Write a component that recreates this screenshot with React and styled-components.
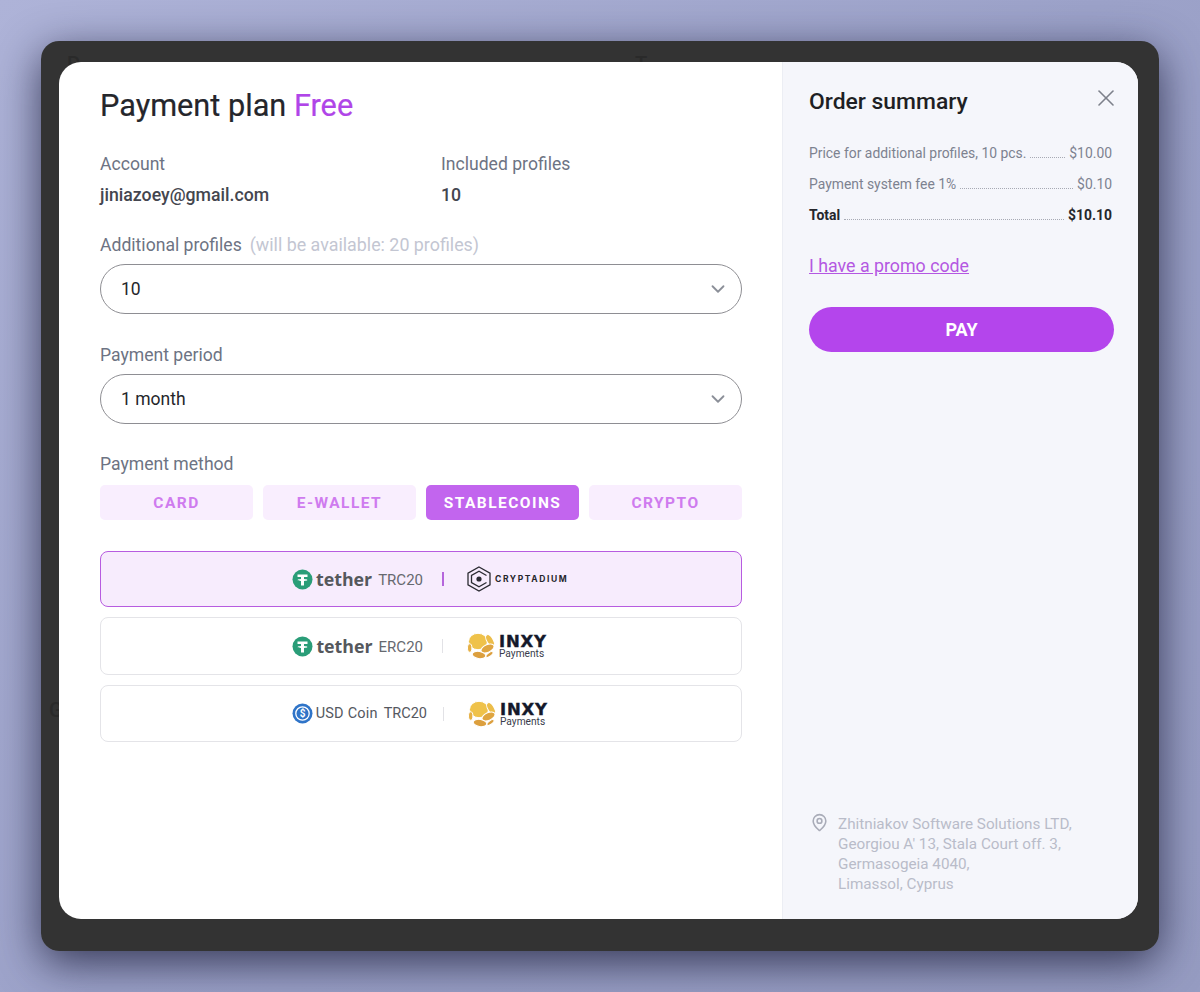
import styled, { createGlobalStyle } from "styled-components";
import { ChevronDown, X, MapPin } from "lucide-react";

const GlobalStyle = createGlobalStyle`
  html, body {
    margin: 0;
    padding: 0;
    background: #9ca2c8;
    font-family: Roboto, "Liberation Sans", sans-serif;
  }
`;

const Page = styled.div`
  width: 1200px;
  height: 992px;
  box-sizing: border-box;
  padding: 41px;
  overflow: hidden;
  background: linear-gradient(135deg, #aeb3d8 0%, #9ca2c9 50%, #969cc2 100%);
`;

const Frame = styled.div`
  position: relative;
  width: 1118px;
  height: 910px;
  box-sizing: border-box;
  padding: 21px 21px 32px 18px;
  overflow: hidden;
  background: #333333;
  border-radius: 18px;
`;

const FrameShadow = styled.div`
  border-radius: 18px;
  box-shadow: 0 12px 44px rgba(20, 22, 50, 0.75);
`;

const Modal = styled.div`
  position: relative;
  height: 857px;
  display: flex;
  background: #fff;
  border-radius: 22px;
  overflow: hidden;
`;

// dimmed page text showing behind the modal
const Ghost = styled.span`
  position: absolute;
  left: ${(p) => p.$x}px;
  top: ${(p) => p.$y}px;
  font-size: 20px;
  line-height: 24px;
  font-weight: 500;
  color: #2a2a2a;
`;

const Main = styled.div`
  width: 724px;
  box-sizing: border-box;
  padding: 25px 40px 0 41px;
  border-right: 1px solid #eceef4;
`;

const Title = styled.h1`
  margin: 0;
  font-size: 30.7px;
  line-height: 38px;
  font-weight: 400;
  color: #25262b;
  -webkit-text-stroke: 0.2px #25262b;
`;

const Accent = styled.span`
  color: #b045e8;
  -webkit-text-stroke: 0.2px #b045e8;
`;

const InfoRow = styled.div`
  display: grid;
  grid-template-columns: 341px 1fr;
  margin-top: 28px;
`;

const Label = styled.div`
  font-size: 17.6px;
  line-height: 22px;
  color: #6d7383;
`;

const Value = styled.div`
  margin-top: 9px;
  font-size: 17.7px;
  line-height: 22px;
  font-weight: 500;
  color: #44464f;
`;

const Field = styled.div`
  margin-top: ${(p) => p.$top}px;
`;

const Hint = styled.span`
  margin-left: 8px;
  font-size: 17.85px;
  color: #c3c6d2;
`;

const SelectBox = styled.div`
  display: flex;
  align-items: center;
  justify-content: space-between;
  box-sizing: border-box;
  height: 50px;
  margin-top: 8px;
  padding: 0 12px 0 20px;
  border: 1px solid #8e8e93;
  border-radius: 25px;
  font-size: 17.5px;
  color: #25262b;

  svg {
    color: #8b8f98;
  }
`;

const Tabs = styled.div`
  display: grid;
  grid-template-columns: repeat(4, 153px);
  justify-content: space-between;
  margin-top: 10px;
`;

const Tab = styled.div`
  display: flex;
  align-items: center;
  justify-content: center;
  height: 35px;
  border-radius: 5px;
  font-size: 15.5px;
  font-weight: 700;
  letter-spacing: 1.45px;
  color: ${(p) => (p.$active ? "#fff" : "#cf7bef")};
  background: ${(p) => (p.$active ? "#c265ee" : "#f9eefe")};
`;

const Methods = styled.div`
  display: flex;
  flex-direction: column;
  gap: 10px;
  margin-top: 31px;
`;

const Method = styled.div`
  display: grid;
  grid-template-columns: ${(p) => p.$split}px 1px 1fr;
  align-items: center;
  height: ${(p) => p.$height}px;
  box-sizing: border-box;
  border: 1px solid ${(p) => (p.$active ? "#b75ce0" : "#e4e4e8")};
  border-radius: 8px;
  background: ${(p) => (p.$active ? "#f7ecfd" : "#fff")};
`;

const CoinSide = styled.div`
  display: flex;
  align-items: center;
  justify-content: flex-end;
  padding-right: ${(p) => p.$pad}px;
`;

const Divider = styled.div`
  height: 14px;
  width: ${(p) => (p.$active ? 2 : 1)}px;
  background: ${(p) => (p.$active ? "#b565dc" : "#e2e2e6")};
`;

const ProviderSide = styled.div`
  display: flex;
  align-items: center;
  padding-left: ${(p) => p.$pad}px;
`;

const TetherWord = styled.span`
  margin-left: 3px;
  font-family: "Open Sans", sans-serif;
  font-size: 17.8px;
  font-weight: 700;
  line-height: 24px;
  color: #55585c;
`;

const Network = styled.span`
  margin-left: 6px;
  margin-top: 2px;
  font-size: 15px;
  color: #66696f;
`;

const CoinName = styled.span`
  margin-left: 3px;
  font-size: 14.5px;
  letter-spacing: 0.2px;
  color: #55585f;
`;

const CoinNetwork = styled.span`
  margin-left: 6px;
  font-size: 14.5px;
  color: #55585f;
`;

const CryptadiumWord = styled.span`
  margin-left: 4px;
  font-family: Inter, sans-serif;
  font-size: 8.5px;
  font-weight: 700;
  letter-spacing: 1.6px;
  color: #26262c;
`;

const InxyText = styled.div`
  display: flex;
  flex-direction: column;
  margin: 2px 0 0 3px;
`;

const InxyWord = styled.span`
  font-family: "DejaVu Sans", sans-serif;
  font-size: 16.5px;
  line-height: 14px;
  font-weight: 700;
  letter-spacing: 0.8px;
  color: #15192b;
  -webkit-text-stroke: 0.4px #15192b;
`;

const InxySub = styled.span`
  font-size: 10.2px;
  line-height: 10px;
  color: #3a3d4c;
`;

const Side = styled.div`
  flex: 1;
  display: flex;
  flex-direction: column;
  box-sizing: border-box;
  padding: 25px 24px 25px 26px;
  background: #f5f6fb;
`;

const SideHead = styled.div`
  display: flex;
  align-items: flex-start;
  justify-content: space-between;
`;

const SideTitle = styled.h2`
  margin: 0;
  font-size: 22.9px;
  line-height: 30px;
  font-weight: 500;
  color: #1e1f24;
`;

const CloseIcon = styled(X)`
  color: #7d818b;
  margin: -3px -6px 0 0;
`;

const Lines = styled.div`
  display: flex;
  flex-direction: column;
  gap: 10px;
  margin-top: 26px;
  padding-right: 2px;
`;

const Line = styled.div`
  display: flex;
  align-items: baseline;
  font-size: 13.9px;
  line-height: 21px;
  font-weight: ${(p) => (p.$total ? 700 : 400)};
  color: ${(p) => (p.$total ? "#25262b" : "#7d8290")};
`;

const Dots = styled.span`
  flex: 1;
  margin: 0 4px;
  border-bottom: 1px dotted #a7aab4;
`;

const Promo = styled.a`
  display: block;
  margin-top: 28px;
  font-size: 17.8px;
  line-height: 24px;
  color: #b458e2;
  text-decoration: underline;
  text-underline-offset: 1px;
`;

const PayButton = styled.button`
  height: 45px;
  margin-top: 29px;
  border: none;
  border-radius: 23px;
  background: #b445ec;
  color: #fff;
  font-family: inherit;
  font-size: 18px;
  font-weight: 700;
`;

const Address = styled.div`
  display: flex;
  gap: 9px;
  margin-top: auto;
  padding-left: 1px;
  font-size: 15.25px;
  line-height: 20px;
  color: #b9bcc9;

  svg {
    flex: none;
    margin-top: -1px;
    color: #a9acb8;
  }
`;

const TetherIcon = () => (
  <svg width="21" height="21" viewBox="0 0 21 21">
    <circle cx="10.5" cy="10.5" r="10" fill="#2a9d78" />
    <path d="M5.5 5.5h10v2.6h-3.5v2c1.8.1 3.5.5 3.5 1s-1.7.9-3.5 1v4.4H9v-4.4c-1.8-.1-3.5-.5-3.5-1s1.7-.9 3.5-1v-2H5.5z" fill="#fff" />
  </svg>
);

const UsdcIcon = () => (
  <svg width="21" height="21" viewBox="0 0 21 21">
    <circle cx="10.5" cy="10.5" r="10" fill="#2f74c8" />
    <circle cx="10.5" cy="10.5" r="6.7" fill="none" stroke="#fff" strokeWidth="1.3" />
    <text x="10.5" y="14" textAnchor="middle" fontSize="10" fontWeight="700" fill="#fff" fontFamily="Roboto, sans-serif">$</text>
  </svg>
);

const CryptadiumIcon = () => (
  <svg width="24" height="26" viewBox="0 0 24 26" fill="none" stroke="#2b2b32">
    <path d="M12 1 23 7.200v11.600L12 25 1 18.800V7.200z" strokeWidth="1.300" />
    <path d="M19.500 9.500 12 5.200 4.500 9.500v7l7.500 4.300 7.500-4.300" strokeWidth="1.300" />
    <circle cx="12" cy="13" r="2.600" fill="#2b2b32" stroke="none" />
  </svg>
);

const InxyIcon = () => (
  <svg width="29" height="26" viewBox="0 0 29 26">
    <g stroke="#fff" strokeWidth="1">
      <ellipse cx="11" cy="8.500" rx="9.500" ry="8.200" fill="#efc24a" />
      <ellipse cx="23" cy="7.500" rx="3.200" ry="6.500" transform="rotate(-30 23 7.500)" fill="#ecbd4a" />
      <ellipse cx="2.700" cy="15" rx="2.200" ry="4.200" fill="#e6b044" />
      <ellipse cx="20.500" cy="15.500" rx="7" ry="3.800" transform="rotate(-25 20.500 15.500)" fill="#dfa540" />
      <ellipse cx="12" cy="22" rx="6.800" ry="3.600" transform="rotate(10 12 22)" fill="#dc9f3e" />
      <ellipse cx="22.500" cy="21.500" rx="4.200" ry="1.800" transform="rotate(-35 22.500 21.500)" fill="#dc9f3e" />
    </g>
  </svg>
);

const Tether = ({ network }) => (
  <CoinSide $pad={19}>
    <TetherIcon />
    <TetherWord>tether</TetherWord>
    <Network>{network}</Network>
  </CoinSide>
);

const Inxy = () => (
  <ProviderSide $pad={24}>
    <InxyIcon />
    <InxyText>
      <InxyWord>INXY</InxyWord>
      <InxySub>Payments</InxySub>
    </InxyText>
  </ProviderSide>
);

const App = () => (
  <>
    <GlobalStyle />
    <Page>
      <FrameShadow>
        <Frame>
          <Ghost $x={26} $y={11}>P</Ghost>
          <Ghost $x={594} $y={11}>T</Ghost>
          <Ghost $x={8} $y={657}>G</Ghost>
          <Modal>
            <Main>
              <Title>
                Payment plan <Accent>Free</Accent>
              </Title>

              <InfoRow>
                <div>
                  <Label>Account</Label>
                  <Value>jiniazoey@gmail.com</Value>
                </div>
                <div>
                  <Label>Included profiles</Label>
                  <Value>10</Value>
                </div>
              </InfoRow>

              <Field $top={28}>
                <Label>
                  Additional profiles<Hint>(will be available: 20 profiles)</Hint>
                </Label>
                <SelectBox>
                  10
                  <ChevronDown size={22} />
                </SelectBox>
              </Field>

              <Field $top={30}>
                <Label>Payment period</Label>
                <SelectBox>
                  1 month
                  <ChevronDown size={22} />
                </SelectBox>
              </Field>

              <Field $top={29}>
                <Label>Payment method</Label>
                <Tabs>
                  <Tab>CARD</Tab>
                  <Tab>E-WALLET</Tab>
                  <Tab $active>STABLECOINS</Tab>
                  <Tab>CRYPTO</Tab>
                </Tabs>
              </Field>

              <Methods>
                <Method $active $split={341} $height={56}>
                  <Tether network="TRC20" />
                  <Divider $active />
                  <ProviderSide $pad={24}>
                    <CryptadiumIcon />
                    <CryptadiumWord>CRYPTADIUM</CryptadiumWord>
                  </ProviderSide>
                </Method>
                <Method $split={341} $height={58}>
                  <Tether network="ERC20" />
                  <Divider />
                  <Inxy />
                </Method>
                <Method $split={342} $height={57}>
                  <CoinSide $pad={16}>
                    <UsdcIcon />
                    <CoinName>USD Coin</CoinName>
                    <CoinNetwork>TRC20</CoinNetwork>
                  </CoinSide>
                  <Divider />
                  <Inxy />
                </Method>
              </Methods>
            </Main>

            <Side>
              <SideHead>
                <SideTitle>Order summary</SideTitle>
                <CloseIcon size={28} strokeWidth={1.4} />
              </SideHead>

              <Lines>
                <Line>
                  Price for additional profiles, 10 pcs.<Dots />$10.00
                </Line>
                <Line>
                  Payment system fee 1%<Dots />$0.10
                </Line>
                <Line $total>
                  Total<Dots />$10.10
                </Line>
              </Lines>

              <Promo>I have a promo code</Promo>
              <PayButton>PAY</PayButton>

              <Address>
                <MapPin size={19} />
                <div>
                  Zhitniakov Software Solutions LTD,
                  <br />
                  Georgiou A' 13, Stala Court off. 3,
                  <br />
                  Germasogeia 4040,
                  <br />
                  Limassol, Cyprus
                </div>
              </Address>
            </Side>
          </Modal>
        </Frame>
      </FrameShadow>
    </Page>
  </>
);

export default App;
